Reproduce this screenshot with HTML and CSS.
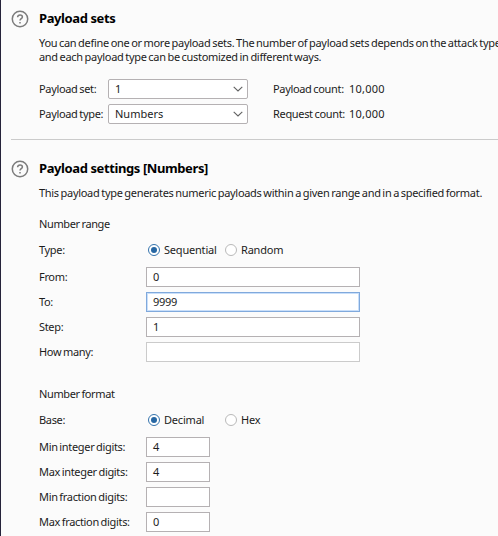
FILE: index.html
```html
<!DOCTYPE html>
<html lang="en">
<head>
<meta charset="utf-8">
<title>Payloads</title>
<link rel="stylesheet" href="styles.css">
</head>
<body>
<main class="panel">
  <section class="section sets">
    <svg class="help" viewBox="0 0 18 18"><circle cx="9" cy="9" r="7.7"/><path d="M6.6 7.2C6.6 5.7 7.6 4.9 9 4.9s2.4.9 2.4 2.1c0 1.6-2.4 1.8-2.4 3.5"/><path class="dot" d="M9 12.1v1.3"/></svg>
    <div class="content">
      <h2 class="title">Payload sets</h2>
      <p class="desc">You can define one or more payload sets. The number of payload sets depends on the attack type<br>and each payload type can be customized in different ways.</p>
      <div class="choices">
        <span class="label">Payload set:</span>
        <div class="select"><span>1</span><svg class="chevron" viewBox="0 0 10 6"><path d="M.7.8 5 5 9.3.8"/></svg></div>
        <span class="label count">Payload count:</span><span class="value">10,000</span>
        <span class="label">Payload type:</span>
        <div class="select"><span>Numbers</span><svg class="chevron" viewBox="0 0 10 6"><path d="M.7.8 5 5 9.3.8"/></svg></div>
        <span class="label count">Request count:</span><span class="value">10,000</span>
      </div>
    </div>
  </section>
  <section class="section settings">
    <svg class="help" viewBox="0 0 18 18"><circle cx="9" cy="9" r="7.7"/><path d="M6.6 7.2C6.6 5.7 7.6 4.9 9 4.9s2.4.9 2.4 2.1c0 1.6-2.4 1.8-2.4 3.5"/><path class="dot" d="M9 12.1v1.3"/></svg>
    <div class="content">
      <h2 class="title">Payload settings [Numbers]</h2>
      <p class="desc">This payload type generates numeric payloads within a given range and in a specified format.</p>
      <h3 class="group">Number range</h3>
      <div class="radios"><span class="label">Type:</span><span class="radio on"><i></i>Sequential</span><span class="radio"><i></i>Random</span></div>
      <div class="fields">
        <span class="label">From:</span><div class="input">0</div>
        <span class="label">To:</span><div class="input focus">9999</div>
        <span class="label">Step:</span><div class="input">1</div>
        <span class="label">How many:</span><div class="input disabled"></div>
      </div>
      <h3 class="group format">Number format</h3>
      <div class="radios"><span class="label">Base:</span><span class="radio on"><i></i>Decimal</span><span class="radio"><i></i>Hex</span></div>
      <div class="fields short">
        <span class="label">Min integer digits:</span><div class="input">4</div>
        <span class="label">Max integer digits:</span><div class="input">4</div>
        <span class="label">Min fraction digits:</span><div class="input"></div>
        <span class="label">Max fraction digits:</span><div class="input">0</div>
      </div>
    </div>
  </section>
</main>
</body>
</html>
```
FILE: styles.css
```css
* { box-sizing: border-box; }
body {
  margin: 0;
  background: #fbfbfb;
  color: #1c1c1c;
  font: 11px/14px "Noto Sans", sans-serif;
  overflow: hidden;
}
.panel {
  height: 536px;
  padding-left: 10px;
  border-left: 1px solid #25233a;
  overflow: hidden;
  white-space: nowrap;
}
.section { display: flex; gap: 10px; }
.sets { height: 140px; padding-top: 9px; border-bottom: 1px solid #cbcbcb; }
.settings { padding-top: 19px; }
.help {
  flex: none;
  width: 18px;
  height: 18px;
  margin-top: 1px;
  fill: none;
  stroke: #7c7c7c;
  stroke-width: 1.5;
}
.content { flex: none; width: 470px; }
.title { margin: 0; height: 20px; font-size: 13px; line-height: 19px; font-weight: 700; letter-spacing: -.4px; color: #000; }
.desc { margin: 7px 0 0; letter-spacing: -.3px; word-spacing: -.8px; }
.label { letter-spacing: -.33px; word-spacing: -.8px; }
.value { letter-spacing: .25px; }
.choices {
  display: grid;
  grid-template-columns: 69px 140px 101px auto;
  grid-auto-rows: 20px;
  row-gap: 5px;
  align-items: center;
  margin-top: 15px;
}
.count { padding-left: 25px; }
.select {
  display: flex;
  align-items: center;
  justify-content: space-between;
  height: 20px;
  padding: 0 4px 0 6px;
  border: 1px solid #b5b1b3;
  border-radius: 2px;
  background: #fff;
}
.chevron { width: 10px; height: 6px; fill: none; stroke: #626262; stroke-width: 1.1; }
.group { margin: 17px 0 0; font-size: 11px; line-height: 14px; font-weight: 400; letter-spacing: -.37px; word-spacing: -.8px; }
.radios {
  display: grid;
  grid-template-columns: 109px 77px auto;
  align-items: center;
  height: 20px;
  margin-top: 9px;
}
.radio { display: flex; align-items: center; gap: 4px; letter-spacing: -.2px; }
.radio i {
  display: grid;
  place-items: center;
  width: 12px;
  height: 12px;
  border: 1px solid #b9b9b9;
  border-radius: 50%;
  background: #fff;
}
.radio.on i { border-color: #3573ac; }
.radio.on i::before { content: ""; width: 6px; height: 6px; border-radius: 50%; background: #2767a3; }
.fields {
  display: grid;
  grid-template-columns: 107px 214px;
  grid-auto-rows: 20px;
  row-gap: 5px;
  align-items: center;
  margin-top: 7px;
}
.short { grid-template-columns: 107px 64px; }
.input {
  height: 20px;
  padding-left: 6px;
  border: 1px solid #b5b1b3;
  background: #fff;
  line-height: 18px;
}
.focus { border-color: #80a9dc; box-shadow: inset 0 0 0 1px #c9dffa; letter-spacing: -.3px; }
.disabled { border-color: #cbcbcb; }
.format { margin-top: 25px; }
```
